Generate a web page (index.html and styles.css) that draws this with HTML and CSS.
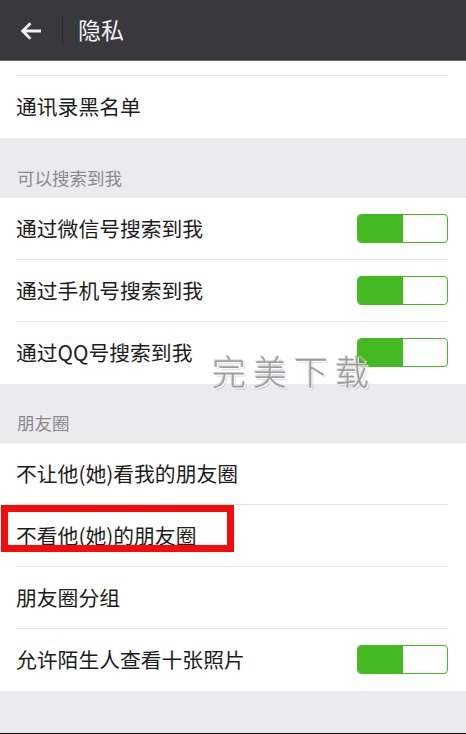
FILE: index.html
```html
<!DOCTYPE html>
<html lang="zh">
<head>
<meta charset="utf-8">
<link rel="stylesheet" href="styles.css">
</head>
<body>
<div class="screen">
  <header class="topbar">
    <span class="back">
      <svg width="22" height="20" viewBox="0 0 22 20"><path d="M21 10H3 M10.5 2.2L2.6 10l7.9 7.8" fill="none" stroke="#f2f2f2" stroke-width="2.8" stroke-linecap="butt" stroke-linejoin="miter"/></svg>
    </span>
    <span class="vdiv"></span>
    <span class="title">隐私</span>
  </header>

  <section class="group">
    <div class="row partial"></div>
    <div class="row last"><span class="label">通讯录黑名单</span></div>
  </section>

  <div class="section-title">可以搜索到我</div>
  <section class="group">
    <div class="row"><span class="label">通过微信号搜索到我</span><span class="switch"><span class="on"></span></span></div>
    <div class="row"><span class="label">通过手机号搜索到我</span><span class="switch"><span class="on"></span></span></div>
    <div class="row last"><span class="label">通过QQ号搜索到我</span><span class="switch"><span class="on"></span></span></div>
  </section>

  <div class="section-title short">朋友圈</div>
  <section class="group">
    <div class="row"><span class="label">不让他(她)看我的朋友圈</span></div>
    <div class="row"><span class="label">不看他(她)的朋友圈</span></div>
    <div class="row"><span class="label">朋友圈分组</span></div>
    <div class="row last"><span class="label">允许陌生人查看十张照片</span><span class="switch"><span class="on"></span></span></div>
  </section>

  <div class="bottom-fill"></div>

  <div class="watermark">完美下载</div>
  <div class="redbox"></div>
</div>
</body>
</html>
```

FILE: styles.css
```css
* { box-sizing: border-box; margin: 0; padding: 0; }
html, body { width: 466px; height: 734px; overflow: hidden; }
body {
  background: #ebebed;
  font-family: "Noto Sans CJK SC", "Noto Sans", sans-serif;
}
.screen {
  position: relative;
  width: 466px;
  height: 734px;
  display: flex;
  flex-direction: column;
  background: #ebebed;
  border-bottom: 1px solid #111;
}
.topbar {
  height: 61px;
  flex: none;
  background: #39383d;
  border-bottom: 1px solid #6a6a6e;
  display: flex;
  align-items: center;
  padding-left: 20px;
}
.back { display: flex; width: 22px; height: 20px; margin-top: 1px; }
.vdiv {
  width: 1px;
  height: 29px;
  background: #2a292d;
  margin-left: 20px;
  margin-right: 15px;
}
.title {
  color: #f4f4f4;
  font-size: 23px;
  line-height: 1;
  margin-top: -2px;
}
.group {
  background: #fff;
  padding-left: 16px;
  flex: none;
}
.row {
  height: 62px;
  display: flex;
  align-items: center;
  justify-content: space-between;
  padding-right: 18px;
  position: relative;
}
.row::after {
  content: "";
  position: absolute;
  left: 0;
  right: 18px;
  bottom: 0;
  height: 1px;
  background: #e3e3e5;
}
.row.last::after { display: none; }
.row.partial { height: 15px; }
.label {
  font-size: 20.8px;
  color: #1c1c1c;
  line-height: 1;
  margin-top: -1px;
}
.section-title {
  height: 60px;
  flex: none;
  padding: 30px 0 0 17px;
  font-size: 17.5px;
  line-height: 20px;
  color: #8a8a8c;
}
.section-title.short { height: 59px; padding-top: 29px; }
.switch {
  width: 91px;
  height: 29px;
  border: 1.5px solid #45b922;
  border-radius: 4px;
  background: #fff;
  display: flex;
  overflow: hidden;
  margin-top: -2px;
}
.on {
  width: 45px;
  height: 100%;
  background: #45b922;
}
.bottom-fill { flex: 1; }
.watermark {
  position: absolute;
  left: 212px;
  top: 350px;
  font-size: 34px;
  font-weight: 300;
  letter-spacing: 7px;
  color: #9c9c9e;
  line-height: 42px;
  text-shadow: 1px 1px 0 #ffffff, -1px -1px 0 #d0d0d0, 2px 2px 1px rgba(0,0,0,0.15);
}
.redbox {
  position: absolute;
  left: 1px;
  top: 505px;
  width: 233px;
  height: 47px;
  border: 7px solid #f40b0b;
}
```
